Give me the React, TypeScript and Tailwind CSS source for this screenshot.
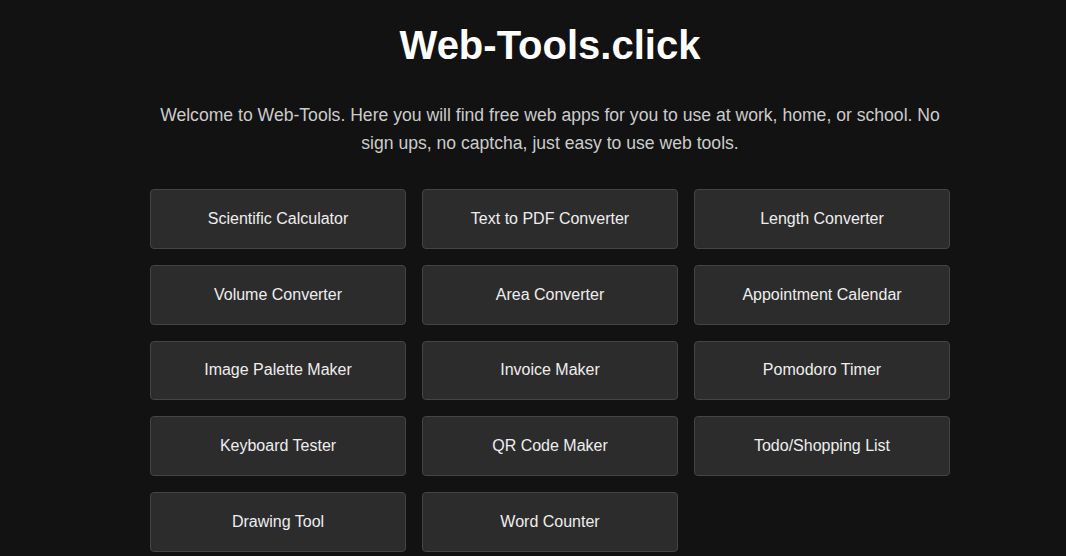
const tools = [
  'Scientific Calculator',
  'Text to PDF Converter',
  'Length Converter',
  'Volume Converter',
  'Area Converter',
  'Appointment Calendar',
  'Image Palette Maker',
  'Invoice Maker',
  'Pomodoro Timer',
  'Keyboard Tester',
  'QR Code Maker',
  'Todo/Shopping List',
  'Drawing Tool',
  'Word Counter',
]

export default function App() {
  return (
    <main className="min-h-screen bg-[#121212] pl-[50px] pr-4 pt-[22px] pb-10 font-['Liberation_Sans',Arial,sans-serif]">
      <div className="mx-auto max-w-[800px]">
        <h1 className="text-center text-[40px] font-bold leading-[46px] text-white">
          Web-Tools.click
        </h1>

        <p className="mt-[33px] text-center text-[17.6px] leading-[28px] text-[#cccccc]">
          Welcome to Web-Tools. Here you will find free web apps for you to use at work, home, or
          school. No sign ups, no captcha, just easy to use web tools.
        </p>

        <div className="mt-[32px] grid grid-cols-3 gap-x-4 gap-y-4">
          {tools.map((tool) => (
            <a
              key={tool}
              href="#"
              className="flex h-[59.75px] items-center justify-center rounded border border-[#444444] bg-[#2c2c2c] text-[16px] text-[#eeeeee]"
            >
              {tool}
            </a>
          ))}
        </div>
      </div>
    </main>
  )
}
